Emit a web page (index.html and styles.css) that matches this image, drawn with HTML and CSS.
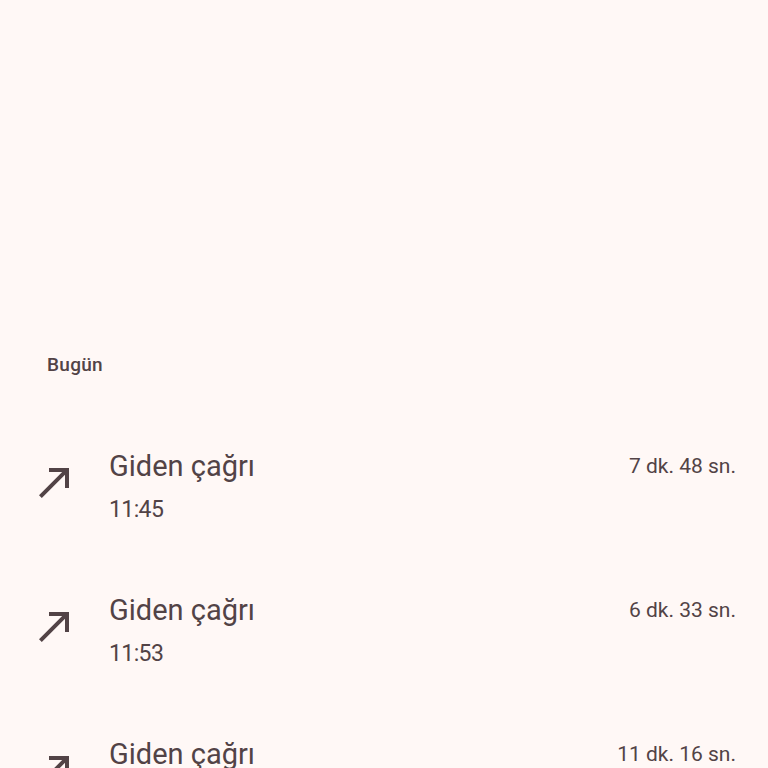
FILE: index.html
```html
<!doctype html>
<html lang="tr">
  <head>
    <meta charset="utf-8" />
    <title>Arama geçmişi</title>
    <link rel="stylesheet" href="styles.css">
  </head>
  <body>
    <div id="main">
      <div class="top-space"></div>
      <div class="section-title">Bugün</div>
      <div class="call-list">
        <div class="call-row">
          <svg class="call-icon" viewBox="0 0 24 24"><path d="M9 5v2h6.59L4 18.59 5.41 20 17 8.41V15h2V5z"/></svg>
          <div class="call-info">
            <div class="call-type">Giden çağrı</div>
            <div class="call-time">11:45</div>
          </div>
          <div class="call-duration">7 dk. 48 sn.</div>
        </div>
        <div class="call-row">
          <svg class="call-icon" viewBox="0 0 24 24"><path d="M9 5v2h6.59L4 18.59 5.41 20 17 8.41V15h2V5z"/></svg>
          <div class="call-info">
            <div class="call-type">Giden çağrı</div>
            <div class="call-time">11:53</div>
          </div>
          <div class="call-duration">6 dk. 33 sn.</div>
        </div>
        <div class="call-row">
          <svg class="call-icon" viewBox="0 0 24 24"><path d="M9 5v2h6.59L4 18.59 5.41 20 17 8.41V15h2V5z"/></svg>
          <div class="call-info">
            <div class="call-type">Giden çağrı</div>
            <div class="call-time">12:08</div>
          </div>
          <div class="call-duration">11 dk. 16 sn.</div>
        </div>
      </div>
    </div>
  </body>
</html>
```

FILE: styles.css
```css
html, body {
  margin: 0;
  background-color: #fff8f6;
  color: #524346;
  font-family: Roboto, "Noto Sans", sans-serif;
}
#main {
  height: 768px;
  overflow: hidden;
}
.top-space {
  height: 353px;
}
.section-title {
  padding-left: 47px;
  font-size: 19px;
  line-height: 24px;
  font-weight: 500;
  letter-spacing: 0.3px;
}
.call-list {
  margin-top: 38px;
}
.call-row {
  display: flex;
  align-items: flex-start;
  height: 144px;
  box-sizing: border-box;
  padding: 33px 32px 33px 31px;
}
.call-icon {
  width: 48px;
  height: 48px;
  margin-top: 10px;
  fill: #524346;
  flex: none;
}
.call-info {
  flex: 1;
  margin-left: 30px;
}
.call-type {
  font-size: 29px;
  line-height: 36px;
}
.call-time {
  margin-top: 10px;
  font-size: 23px;
  line-height: 32px;
  letter-spacing: -0.6px;
}
.call-duration {
  font-size: 21px;
  line-height: 36px;
}
```
